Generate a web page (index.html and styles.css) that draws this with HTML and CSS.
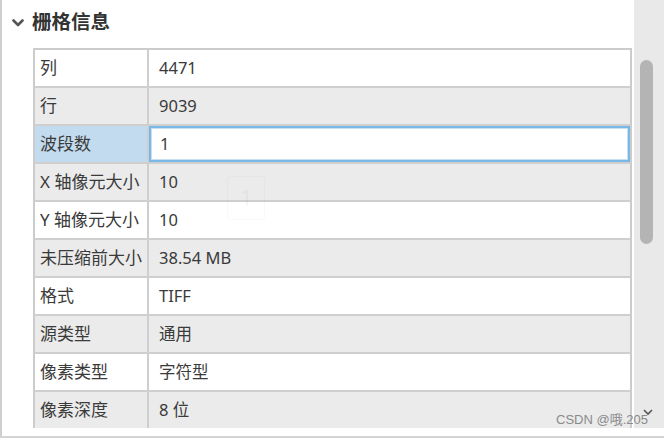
FILE: index.html
```html
<!DOCTYPE html>
<html lang="zh-CN">
<head>
<meta charset="utf-8">
<title>栅格信息</title>
<link rel="stylesheet" href="styles.css">
</head>
<body>
<div class="panel">
  <div class="scroll">
    <div class="content">
      <div class="header">
        <svg class="chev" width="12" height="8" viewBox="0 0 12 8"><path d="M1.5 1.5 L6 6 L10.5 1.5" fill="none" stroke="#555" stroke-width="2.6" stroke-linecap="round" stroke-linejoin="round"/></svg>
        <span class="title">栅格信息</span>
      </div>
      <div class="table">
        <div class="row"><div class="label">列</div><div class="value">4471</div></div>
        <div class="row alt"><div class="label">行</div><div class="value">9039</div></div>
        <div class="row sel"><div class="label">波段数</div><div class="value"><div class="input">1</div></div></div>
        <div class="row alt"><div class="label">X 轴像元大小</div><div class="value">10</div></div>
        <div class="row"><div class="label">Y 轴像元大小</div><div class="value">10</div></div>
        <div class="row alt"><div class="label">未压缩前大小</div><div class="value">38.54 MB</div></div>
        <div class="row"><div class="label">格式</div><div class="value">TIFF</div></div>
        <div class="row alt"><div class="label">源类型</div><div class="value">通用</div></div>
        <div class="row"><div class="label">像素类型</div><div class="value">字符型</div></div>
        <div class="row alt"><div class="label">像素深度</div><div class="value">8 位</div></div>
        <div class="ghost">1</div>
      </div>
    </div>
    <div class="scrollbar">
      <div class="thumb"></div>
      <svg class="down" width="10" height="7" viewBox="0 0 10 7"><path d="M1 1 L5 5 L9 1" fill="none" stroke="#555" stroke-width="1.6"/></svg>
    </div>
  </div>
  <div class="footer"></div>
  <div class="watermark">CSDN @哦.205</div>
</div>
</body>
</html>
```

FILE: styles.css
```css
html, body {
  margin: 0;
  padding: 0;
  background: #ffffff;
}

body {
  font-family: "Noto Sans", "Open Sans", "Noto Sans CJK SC", sans-serif;
  color: #333333;
}

.panel {
  position: relative;
  width: 664px;
  height: 438px;
  box-sizing: border-box;
  border-left: 2px solid #cfcfcf;
  border-bottom: 2px solid #d4d4d4;
  display: flex;
  flex-direction: column;
}

.scroll {
  height: 428px;
  display: flex;
  flex-direction: row;
  overflow: hidden;
}

.content {
  flex: 1;
  overflow: hidden;
}

.header {
  height: 48px;
  display: flex;
  align-items: center;
  padding-left: 10px;
  box-sizing: border-box;
  padding-bottom: 6px;
}

.chev {
  display: block;
  margin-top: 3px;
}

.title {
  margin-left: 8px;
  font-family: "Noto Sans CJK SC", sans-serif;
  font-weight: 700;
  font-size: 19.5px;
  line-height: 24px;
  color: #333333;
}

.table {
  position: relative;
  margin-left: 31px;
  width: 599px;
  box-sizing: border-box;
  border: 2px solid #cccccc;
  border-bottom: none;
}

.row {
  display: flex;
  height: 38px;
  box-sizing: border-box;
  border-bottom: 2px solid #cfcfcf;
  background: #ffffff;
}

.row.alt {
  background: #ebebeb;
}

.label {
  width: 114px;
  box-sizing: border-box;
  flex: none;
  border-right: 2px solid #cfcfcf;
  padding-left: 5px;
  display: flex;
  align-items: center;
  font-size: 17px;
  line-height: 20px;
  white-space: nowrap;
  overflow: hidden;
  font-family: "Noto Sans", "Noto Sans CJK SC", sans-serif;
  color: #3a3a3a;
}

.value {
  flex: 1;
  padding-left: 10px;
  display: flex;
  align-items: center;
  font-size: 16.5px;
  line-height: 20px;
  white-space: nowrap;
  color: #3a3a3a;
}

.row.sel .label {
  background: #c3dbee;
}

.row.sel .value {
  padding-left: 0;
  align-items: stretch;
}

.input {
  flex: 1;
  display: flex;
  align-items: center;
  background: #ffffff;
  border: 2px solid #79b8e6;
  box-shadow: inset 0 0 0 1px #c8def1;
  padding-left: 9px;
}

.ghost {
  position: absolute;
  left: 192px;
  top: 126px;
  width: 36px;
  height: 42px;
  border: 1px solid rgba(0, 0, 0, 0.025);
  border-radius: 3px;
  color: rgba(0, 0, 0, 0.05);
  font-size: 22px;
  line-height: 40px;
  text-align: center;
}

.scrollbar {
  width: 30px;
  flex: none;
  background: #e9e9e9;
  position: relative;
}

.thumb {
  position: absolute;
  left: 6px;
  top: 60px;
  width: 13px;
  height: 184px;
  border-radius: 7px;
  background: #b4b4b4;
}

.down {
  position: absolute;
  left: 9px;
  top: 409px;
  display: block;
}

.footer {
  flex: 1;
}

.watermark {
  position: absolute;
  right: 16px;
  top: 412px;
  font-family: "Liberation Sans", "Noto Sans CJK SC", sans-serif;
  font-size: 13px;
  line-height: 16px;
  color: #8a8a8a;
}
```
